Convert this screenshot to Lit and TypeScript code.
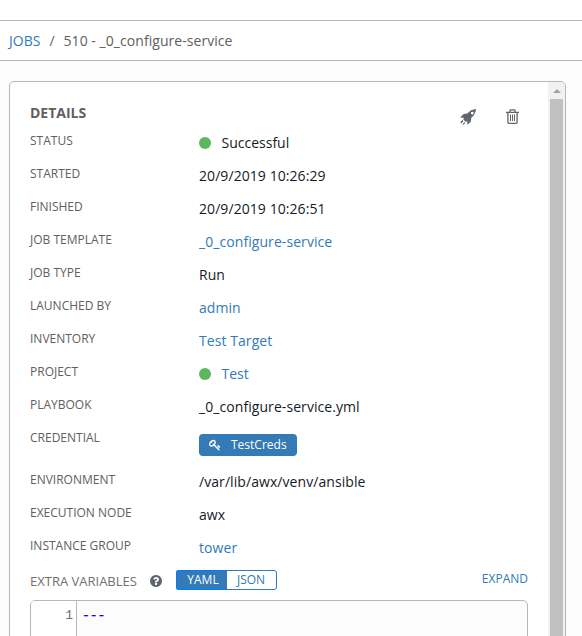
import { LitElement, html, css, svg, nothing } from "lit";
import { customElement } from "lit/decorators.js";
import { classMap } from "lit/directives/class-map.js";

interface Row {
  label: string;
  value: string;
  link?: boolean;
  dot?: boolean;
  tag?: boolean;
}

const rows: Row[] = [
  { label: "STATUS", value: "Successful", dot: true },
  { label: "STARTED", value: "20/9/2019 10:26:29" },
  { label: "FINISHED", value: "20/9/2019 10:26:51" },
  { label: "JOB TEMPLATE", value: "_0_configure-service", link: true },
  { label: "JOB TYPE", value: "Run" },
  { label: "LAUNCHED BY", value: "admin", link: true },
  { label: "INVENTORY", value: "Test Target", link: true },
  { label: "PROJECT", value: "Test", link: true, dot: true },
  { label: "PLAYBOOK", value: "_0_configure-service.yml" },
  { label: "CREDENTIAL", value: "TestCreds", tag: true },
  { label: "ENVIRONMENT", value: "/var/lib/awx/venv/ansible" },
  { label: "EXECUTION NODE", value: "awx" },
  { label: "INSTANCE GROUP", value: "tower", link: true },
];

const rocket = svg`<path fill-rule="evenodd" d="M16 0C12.500 .2 9.500 1.800 7.300 4.500L3.800 5.100Q1.500 6.500 .3 9L3.800 8.600L3.300 10.400L5.700 12.700L7.500 12.200L7.200 15.700Q9.700 14.500 10.900 12.200L11.300 8.800C14.200 6.500 15.800 3.500 16 0ZM12.300 2.700A1.400 1.400 0 1 1 12.300 5.500A1.400 1.400 0 1 1 12.300 2.700Z"/><path d="M2.400 11.100L3.500 12.100L1.300 14.500Q.3 14 .7 12.700ZM4.300 12.900L5.200 13.700Q4.700 15.500 2.300 15.700Z"/>`;
const key = svg`<path d="M832 512q0-80-56-136t-136-56-136 56-56 136q0 42 19 83-41-19-83-19-80 0-136 56t-56 136 56 136 136 56 136-56 56-136q0-42-19-83 41 19 83 19 80 0 136-56t56-136zm851 704q0 17-49 66t-66 49q-9 0-28.5-16t-36.5-33-38.5-40-24.5-26l-96 96 220 220q28 28 28 68 0 42-39 81t-81 39q-40 0-68-28l-671-671q-176 131-365 131-163 0-265.5-102.5t-102.5-265.5q0-160 95-313t248-248 313-95q163 0 265.5 102.5t102.5 265.5q0 189-131 365l355 355 96-96q-3-3-26-24.5t-40-38.5-33-36.5-16-28.5q0-17 49-66t66-49q13 0 23 10 6 6 46 44.5t82 79.5 86.500 86 73 78 28.500 41z"/>`;
const question = svg`<path d="M1024 1376v-192q0-14-9-23t-23-9h-192q-14 0-23 9t-9 23v192q0 14 9 23t23 9h192q14 0 23-9t9-23zm256-672q0-88-55.5-163t-138.500-116-170-41q-243 0-371 213-15 24 8 42l132 100q7 6 19 6 16 0 25-12 53-68 86-92 34-24 86-24 48 0 85.500 26t37.500 59q0 38-20 61t-68 45q-63 28-115.500 86.500t-52.500 125.500v36q0 14 9 23t23 9h192q14 0 23-9t9-23q0-19 21.500-49.500t54.500-49.500q32-18 49-28.500t46-35 44.500-48 28-60.500 12.500-81zm384 192q0 209-103 385.500t-279.500 279.500-385.500 103-385.500-103-279.500-279.500-103-385.500 103-385.500 279.500-279.500 385.500-103 385.500 103 279.500 279.500 103 385.500z"/>`;

@customElement("app-root")
export class AppRoot extends LitElement {
  static styles = css`
    :host {
      display: flex;
      flex-direction: column;
      height: 636px;
      overflow: hidden;
      background: #fcfcfc;
      color: #606060;
      font: 14px/20px "Open Sans", "Noto Sans", sans-serif;
    }
    * { box-sizing: border-box; }
    svg { display: block; fill: currentColor; }
    .topbar { flex: none; height: 20px; background: #fff; }
    .crumbs {
      flex: none;
      display: flex;
      align-items: center;
      height: 41px;
      padding-left: 9px;
      background: #fff;
      border: solid #b7b7b7;
      border-width: 1px 0;
      white-space: pre;
    }
    .slash { padding: 0 9px; }
    .job { letter-spacing: 0.05px; }
    .link { color: #337ab7; }
    .panel {
      flex: none;
      display: flex;
      width: 557px;
      height: 600px;
      margin: 20px 0 0 9px;
      border: 1px solid #b7b7b7;
      border-radius: 5px;
      background: #fff;
      overflow: hidden;
    }
    .content { flex: 1; min-width: 0; padding: 20px 20px 0; }
    .heading { display: flex; justify-content: space-between; height: 28px; }
    .title { font-size: 14px; font-weight: 700; line-height: 22px; }
    .actions { display: flex; gap: 30px; padding: 7px 9px 0 0; color: #5f646d; }
    .row { display: flex; height: 33px; }
    .row.tall { height: 42px; }
    .label { width: 169px; font-size: 12px; line-height: 22px; }
    .value { display: flex; align-items: center; height: 25px; color: #161b1f; letter-spacing: 0.07px; }
    .value.link { color: #337ab7; }
    .value.status { letter-spacing: 0; }
    .dot { width: 12px; height: 12px; margin-right: 10.5px; border-radius: 50%; background: #5cb85c; }
    .tag {
      display: flex;
      align-items: center;
      height: 22px;
      width: 98px;
      margin-top: 7px;
      padding-left: 10px;
      gap: 10px;
      border-radius: 4px;
      background: #337ab7;
      color: #fff;
      font-size: 12px;
    }
    .extra { display: flex; align-items: flex-start; height: 32px; padding-top: 1px; font-size: 12px; }
    .extra-label { font-size: 13px; line-height: 25px; color: #707070; width: 120px; }
    .help { color: #5f646d; padding-top: 6px; width: 26px; }
    .toggle {
      display: flex;
      width: 101px;
      height: 20px;
      margin-top: 1px;
      border: 1px solid #337ab7;
      border-radius: 3px;
      line-height: 18px;
      color: #337ab7;
      text-align: center;
    }
    .yaml {
      width: 51px;
      margin: -1px 0 -1px -1px;
      padding-left: 2px;
      border: 1px solid #007bff;
      border-right: 0;
      border-radius: 3px 0 0 3px;
      background: #337ab7;
      color: #fff;
    }
    .json { flex: 1; padding-right: 1px; }
    .expand { margin-left: auto; color: #337ab7; }
    .editor {
      display: flex;
      height: 80px;
      border: 1px solid #b7b7b7;
      border-radius: 5px;
      background: #fcfcfc;
      overflow: hidden;
      font: 13px/20px "Liberation Mono", monospace;
    }
    .gutter {
      width: 46px;
      padding: 5px 3px 0 0;
      border-right: 1px solid #b7b7b7;
      background: #fff;
      color: #707070;
      text-align: right;
    }
    .code { padding: 5px 0 0 5px; color: #00f; -webkit-text-stroke: 0.4px #00f; }
    .scrollbar {
      flex: none;
      display: flex;
      flex-direction: column;
      align-items: center;
      width: 17px;
      background: #f1f1f1;
    }
    .arrow { height: 17px; padding-top: 7px; color: #a3a3a3; }
    .thumb { width: 13px; flex: 1; background: #c1c1c1; }
  `;

  private row(r: Row) {
    return html`<div class=${classMap({ row: true, tall: !!r.tag })}>
      <div class="label">${r.label}</div>
      ${r.tag
        ? html`<div class="tag"><svg width="12" height="12" viewBox="0 0 1792 1792">${key}</svg><span>${r.value}</span></div>`
        : html`<div class=${classMap({ value: true, link: !!r.link, status: !!r.dot })}>
            ${r.dot ? html`<span class="dot"></span>` : nothing}<span>${r.value}</span>
          </div>`}
    </div>`;
  }

  render() {
    return html`
      <div class="topbar"></div>
      <div class="crumbs"><span class="link">JOBS</span><span class="slash">/</span><span class="job">510 - _0_configure-service</span></div>
      <div class="panel">
        <div class="content">
          <div class="heading">
            <span class="title">DETAILS</span>
            <div class="actions">
              <svg width="16" height="16" viewBox="0 0 16 16">${rocket}</svg>
              <svg width="13" height="15" viewBox="0 0 13 15">
                <path fill="none" stroke="currentColor" stroke-width="1.3" d="M0 3.3H13M4 3V1.5Q4 .9 4.700 .9H8.300Q9 .9 9 1.500V3M1.900 3.300V13.200Q1.900 14.300 3 14.300H10Q11.100 14.300 11.100 13.200V3.300" />
                <path fill="none" stroke="currentColor" stroke-width="1" d="M4.500 5.500V12M6.500 5.500V12M8.500 5.500V12" />
              </svg>
            </div>
          </div>
          ${rows.map((r) => this.row(r))}
          <div class="extra">
            <span class="extra-label">EXTRA VARIABLES</span>
            <span class="help"><svg width="12" height="12" viewBox="128 128 1536 1536">${question}</svg></span>
            <div class="toggle"><span class="yaml">YAML</span><span class="json">JSON</span></div>
            <span class="expand">EXPAND</span>
          </div>
          <div class="editor">
            <div class="gutter">1</div>
            <div class="code">---</div>
          </div>
        </div>
        <div class="scrollbar">
          <div class="arrow"><svg width="8" height="4" viewBox="0 0 8 4"><path d="M4 0L8 4H0Z" /></svg></div>
          <div class="thumb"></div>
        </div>
      </div>
    `;
  }
}
